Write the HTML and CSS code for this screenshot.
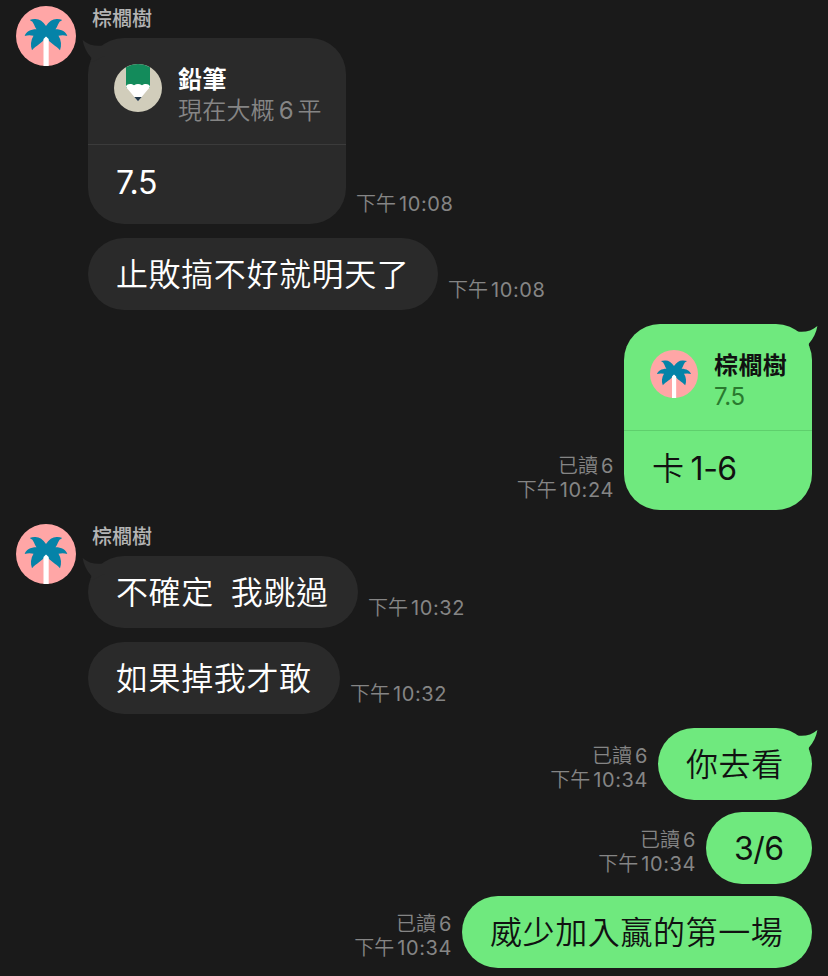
FILE: index.html
```html
<!DOCTYPE html>
<html lang="zh-Hant">
<head>
<meta charset="utf-8">
<title>聊天</title>
<link rel="stylesheet" href="styles.css">
</head>
<body>
<svg class="defs" aria-hidden="true">
  <symbol id="palm" viewBox="0 0 60 60">
    <circle cx="30" cy="30" r="30" fill="#ffa6a6"/>
    <path fill="#0583a8" d="M30 20C27 15.500 23.500 13 19.500 13Q16.500 12.800 13.700 13.900Q17 15.300 18 18.500Q19 21.500 20.500 23.300C14.500 23.300 9.800 26 8.700 30Q13 28.800 17.500 29.800C14.700 34.500 14.200 39.500 16 44.200C20 39.500 26 37.500 30 31C34 37.500 40 39.500 44 44.200C45.800 39.500 45.300 34.500 42.500 29.800Q47 28.800 51.300 30C50.200 26 45.500 23.300 39.500 23.300Q41 21.500 42 18.500Q43 15.300 46.300 13.900Q43.500 12.800 40.500 13C36.500 13 33 15.500 30 20Z"/>
    <path fill="#fff" d="M27.500 33L30 30.500L32.700 33V59.900H27.500Z"/>
  </symbol>
  <symbol id="pencil" viewBox="0 0 48 48">
    <circle cx="24" cy="24" r="24" fill="#d1cdbb"/>
    <path fill="#138b5b" d="M12 3.200Q24-3.200 36 3.200V24H12Z"/>
    <path fill="#fff" d="M12 23C12 20 17 19 20 21.300Q24 18.500 28 21.300C31 19 36 20 36 23L24 37.300Z"/>
    <path fill="#25394a" d="M20.300 33H27.700L24 37.300Z"/>
  </symbol>
  <symbol id="tail" viewBox="0 0 26 24">
    <path d="M7.300 7.700C14 8.200 20.500 6.500 25.400 2C24.300 8.500 21.500 14.500 17 19.500L16 24L3 18V7Z"/>
  </symbol>
</svg>
<main class="chat">
  <section class="group">
    <svg class="avatar"><use href="#palm"/></svg>
    <div class="stack">
      <div class="sender">棕櫚樹</div>
      <div class="row">
        <div class="bubble w-quote-in">
          <svg class="tail"><use href="#tail"/></svg>
          <div class="quote">
            <svg class="quote-avatar"><use href="#pencil"/></svg>
            <div><div class="quote-name">鉛筆</div><div class="quote-text">現在大概<span class="num mid">6</span>平</div></div>
          </div>
          <div class="text"><span class="num">7.5</span></div>
        </div>
        <div class="meta"><div>下午<span class="num">10:08</span></div></div>
      </div>
      <div class="row next">
        <div class="bubble w-nine"><div class="text">止敗搞不好就明天了</div></div>
        <div class="meta"><div>下午<span class="num">10:08</span></div></div>
      </div>
    </div>
  </section>
  <section class="mine">
    <div class="row">
      <div class="meta"><div>已讀<span class="num">6</span></div><div>下午<span class="num">10:24</span></div></div>
      <div class="bubble w-quote-out">
        <svg class="tail"><use href="#tail"/></svg>
        <div class="quote">
          <svg class="quote-avatar"><use href="#palm"/></svg>
          <div><div class="quote-name">棕櫚樹</div><div class="quote-text"><span class="num">7.5</span></div></div>
        </div>
        <div class="text">卡<span class="num after">1-6</span></div>
      </div>
    </div>
  </section>
  <section class="group">
    <svg class="avatar"><use href="#palm"/></svg>
    <div class="stack">
      <div class="sender">棕櫚樹</div>
      <div class="row">
        <div class="bubble w-skip"><svg class="tail"><use href="#tail"/></svg><div class="text">不確定<span class="pause"> </span>我跳過</div></div>
        <div class="meta"><div>下午<span class="num">10:32</span></div></div>
      </div>
      <div class="row next">
        <div class="bubble w-six"><div class="text">如果掉我才敢</div></div>
        <div class="meta"><div>下午<span class="num">10:32</span></div></div>
      </div>
    </div>
  </section>
  <section class="mine">
    <div class="row">
      <div class="meta"><div>已讀<span class="num">6</span></div><div>下午<span class="num">10:34</span></div></div>
      <div class="bubble w-three"><svg class="tail"><use href="#tail"/></svg><div class="text">你去看</div></div>
    </div>
    <div class="row">
      <div class="meta"><div>已讀<span class="num">6</span></div><div>下午<span class="num">10:34</span></div></div>
      <div class="bubble w-score"><div class="text"><span class="num">3/6</span></div></div>
    </div>
    <div class="row">
      <div class="meta"><div>已讀<span class="num">6</span></div><div>下午<span class="num">10:34</span></div></div>
      <div class="bubble w-nine"><div class="text">威少加入贏的第一場</div></div>
    </div>
  </section>
</main>
</body>
</html>
```
FILE: styles.css
```css
* { box-sizing: border-box; }
body {
  margin: 0;
  background: #1a1a1a;
  font-family: "Noto Sans CJK TC", sans-serif;
  font-weight: 350;
  white-space: nowrap;
}
.defs { position: absolute; width: 0; height: 0; }
.chat {
  height: 976px;
  padding: 6px 16px 8px;
  display: flex;
  flex-direction: column;
  gap: 14px;
  overflow: hidden;
}
.num { font-family: Inter, sans-serif; font-weight: 400; line-height: 1; }
.group { display: flex; gap: 12px; align-items: flex-start; }
.avatar { width: 60px; height: 60px; flex: none; }
.sender {
  height: 32px;
  padding-left: 4px;
  color: #b4b4b4;
  font-size: 20px;
  font-weight: 500;
  line-height: 24px;
}
.row { display: flex; align-items: flex-end; gap: 10px; }
.next { margin-top: 14px; }
.mine { display: flex; flex-direction: column; align-items: flex-end; gap: 12px; }
.bubble {
  position: relative;
  flex: none;
  border-radius: 36px;
  background: #2a2a2a;
  color: #fff;
  fill: #2a2a2a;
}
.mine .bubble { background: #6fe97e; color: #111; fill: #6fe97e; }
.tail { position: absolute; top: 0; right: -6px; width: 26px; height: 24px; }
.group .tail { right: auto; left: -6px; transform: scaleX(-1); }
.text {
  height: 72px;
  padding: 0 28px;
  font-size: 32px;
  line-height: 68px;
  letter-spacing: 0.6px;
}
.text .num { font-size: 32px; letter-spacing: -0.5px; }
.text .after { margin-left: 6px; }
.pause { display: inline-block; width: 17px; }
.quote {
  height: 107px;
  padding: 26px 26px 0;
  display: flex;
  gap: 16px;
  border-bottom: 1px solid #3b3b3b;
}
.quote + .text { height: 79px; line-height: 71px; }
.mine .quote { border-color: #5fcf6d; }
.quote-avatar { width: 48px; height: 48px; flex: none; }
.quote-name { font-size: 24px; font-weight: 700; line-height: 28px; letter-spacing: 0.4px; }
.quote-text { color: #858585; font-size: 24px; line-height: 34px; letter-spacing: 0.2px; }
.mine .quote-text { color: #2a7a2f; }
.quote-text .num { letter-spacing: -0.3px; }
.quote-text .mid { margin: 0 4px; }
.meta {
  padding-bottom: 9px;
  color: #858585;
  font-size: 20px;
  line-height: 24px;
}
.mine .meta { text-align: right; }
.meta .num { margin-left: 3px; font-size: 20px; letter-spacing: 0.6px; }
.w-quote-in { width: 258px; }
.w-quote-out { width: 188px; }
.w-nine { width: 350px; }
.w-skip { width: 270px; }
.w-six { width: 252px; }
.w-three { width: 154px; }
.w-score { width: 106px; }
```
